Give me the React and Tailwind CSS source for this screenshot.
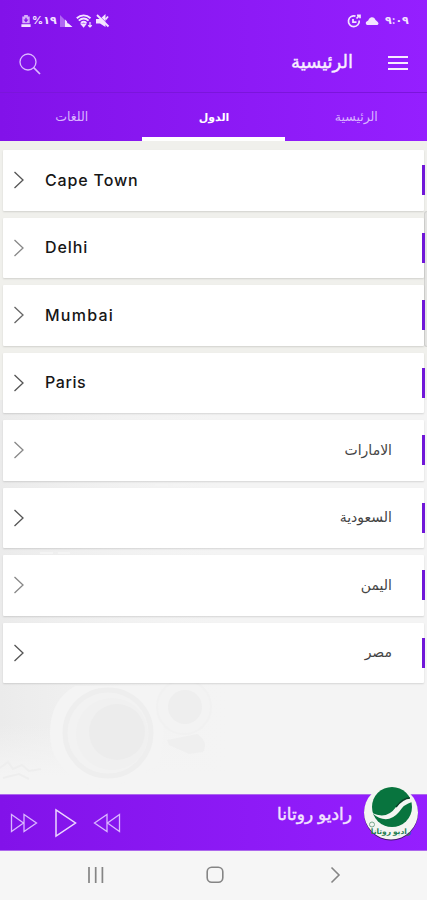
// Countries tab of the radio app, with the mini player at the bottom
const countries = [
  { name: 'Cape Town', latin: true, cls: 'tracking-[0.85px]', arrow: 'text-[#555]' },
  { name: 'Delhi', latin: true, cls: 'tracking-[0.9px]', arrow: 'text-[#888]' },
  { name: 'Mumbai', latin: true, cls: 'tracking-[1.25px]', arrow: 'text-[#666]' },
  { name: 'Paris', latin: true, cls: 'tracking-[0.6px]', arrow: 'text-[#555]' },
  { name: 'الامارات', arrow: 'text-[#888]' },
  { name: 'السعودية', arrow: 'text-[#555]' },
  { name: 'اليمن', arrow: 'text-[#888]' },
  { name: 'مصر', arrow: 'text-[#555]' },
];

const tabs = [
  { label: 'اللغات', color: 'text-[#d9b3ff]' },
  { label: 'الدول', active: true, color: 'text-white font-bold text-[11px]' },
  { label: 'الرئيسية', color: 'text-[#d9b3ff]' },
];

function StatusBar() {
  return (
    <div className="flex h-10 items-center justify-between pt-px pl-[21px] pr-[21px] text-[#f3e4ff]">
      <div className="flex items-center">
        <svg width="10" height="12" viewBox="0 0 10 13" fill="currentColor">
          <path d="M3 0h4v1.5h2V9H1V1.5h2z" opacity=".75" />
          <path d="M4.3 3h1.4v2h2L5 8 2.3 5h2z" fill="#8615ed" />
          <path d="M0 10h10v3H0z" />
        </svg>
        <span className="ml-[1px] w-[25px] text-[11px] leading-none font-bold tracking-[-1.1px] whitespace-nowrap [direction:ltr]">%١٩</span>
        <svg className="ml-[3px]" width="13" height="13" viewBox="0 0 13 13" fill="currentColor">
          <path d="M0 1l12 12H0z" opacity=".4" />
          <path d="M5 5.500l2 2V9l2 1 3.500 3H5z" />
        </svg>
        <svg className="ml-[3px]" width="17" height="14" viewBox="0 0 17 14" fill="none" stroke="currentColor" strokeWidth="1.900">
          <path d="M.8 4.200C4.800 .4 10.500 .4 14.500 4.200" />
          <path d="M2.800 6.600c3-2.700 6.800-2.700 9.800 0M5 8.900c1.700-1.400 3.700-1.400 5.400 0" />
          <path d="M6 10.500h3L7.600 12.300z" fill="currentColor" />
          <path d="M14 8v5m-1.800-1.700l1.800 1.700 1.800-1.700" strokeWidth="1.200" />
        </svg>
        <svg className="ml-[3px]" width="14" height="14" viewBox="0 0 14 14" fill="currentColor">
          <path d="M0 5h4l5.500-5v13L4 9.500H0z" />
          <path d="M2 .5l12 12" stroke="#8917f3" strokeWidth="1" />
          <path d="M1 1l11.500 11.500M9.500 5.500l2.500-3" stroke="currentColor" strokeWidth="1.800" />
        </svg>
      </div>
      <div className="flex items-center">
        <svg width="14" height="14" viewBox="0 0 14 14" fill="none" stroke="currentColor" strokeWidth="1.700">
          <path d="M8.500 2.100A5.400 5.400 0 1 0 12.200 6.500" />
          <path d="M6 5v3.200h3.500M9.500 4.500L12 2M10 1.300h3v3" />
        </svg>
        <svg className="ml-[4px]" width="14" height="9" viewBox="0 0 14 9" fill="currentColor">
          <path d="M2.300 9A2 2 0 0 1 2 5.200Q3.500 4.600 3.800 3.200A3.500 3.500 0 0 1 9.500 2.300Q10.500 4.700 12.500 5.700 14.500 7.700 12.500 9z" />
        </svg>
        <span className="ml-[6px] w-[21px] text-[11px] leading-none font-bold tracking-[-1.600px] whitespace-nowrap [direction:ltr]">٩:٠٩</span>
      </div>
    </div>
  );
}

function Header() {
  return (
    <header className="flex h-[141px] shrink-0 flex-col bg-linear-to-r from-[#8212e9] to-[#951fff]">
      <StatusBar />
      <div className="flex h-[53px] items-center border-b border-[#7b15db] pb-[6px] pl-[19px] pr-[19px] text-[#f8efff]">
        <svg className="mt-[1px]" width="22" height="22" viewBox="0 0 22 22" fill="none" stroke="#dcbaff" strokeWidth="1.300">
          <circle cx="9" cy="9" r="8" />
          <path d="M14.700 14.700L21 21" strokeWidth="1.700" />
        </svg>
        <h1 dir="rtl" className="mr-[35px] mb-[3px] ml-auto w-[62px] text-[18px] leading-6 font-normal whitespace-nowrap [-webkit-text-stroke:0.4px_#f8efff]">
          الرئيسية
        </h1>
        <div className="flex w-5 flex-col gap-[4px]">
          <i className="h-[2px] bg-[#f6ebff]" />
          <i className="h-[2px] bg-[#f6ebff]" />
          <i className="h-[2px] bg-[#f6ebff]" />
        </div>
      </div>
      <nav className="grid h-12 grid-cols-3 text-[12.500px]">
        {tabs.map((tab) => (
          <div
            key={tab.label}
            className={`flex items-center justify-center border-b-4 ${tab.active ? 'border-white' : 'border-transparent'} ${tab.color}`}
          >
            <span dir="rtl" className="mt-[4px] ml-[1px]">{tab.label}</span>
          </div>
        ))}
      </nav>
    </header>
  );
}

// Faint loudspeakers behind the list
function Backdrop() {
  return (
    <svg className="absolute inset-0" width="427" height="653" viewBox="0 141 427 653">
      <defs>
        <linearGradient id="shade">
          <stop offset="0" stopColor="#ebebeb" />
          <stop offset="1" stopColor="#f3f3f3" stopOpacity="0" />
        </linearGradient>
        <linearGradient id="fade" x1="0" x2="0" y1="0" y2="1">
          <stop offset="0" stopColor="#f4f4f4" stopOpacity="0" />
          <stop offset="1" stopColor="#f4f4f4" />
        </linearGradient>
      </defs>
      <path d="M0 141H427V400H0z" fill="#f0f0ec" />
      <path d="M0 400H230V794H0z" fill="url(#shade)" />
      <path d="M0 725H230V775H0z" fill="url(#fade)" />
      <path d="M0 775H230V794H0z" fill="#f4f4f4" />
      <path d="M40 553h30M155 485h38" stroke="#f4f4f4" strokeWidth="2" strokeDasharray="13 5" />
      <path d="M75 686H160Q168 735 158 765L108 791Q50 778 50 733 50 700 75 686z" fill="#f4f4f4" />
      <circle cx="108" cy="733" r="43" fill="#f2f2f2" stroke="#eee" strokeWidth="5" />
      <circle cx="112" cy="734" r="36" fill="#f0f0f0" />
      <circle cx="117" cy="732" r="28" fill="#ececec" />
      <circle cx="184" cy="707" r="27" fill="#f3f3f3" stroke="#f1f1f1" strokeWidth="2" />
      <circle cx="185" cy="707" r="17" fill="#eee" />
      <path d="M167 740l30-6q12 8 6 18l-14 2-20-9z" fill="#efefef" />
      <path d="M0 768l8-6 5 7 9-4 7 6 12-2M3 778l16-4 10 5" fill="none" stroke="#eee" strokeWidth="2" />
    </svg>
  );
}

function CountryCard({ item }) {
  return (
    <li className="mr-[3px] flex h-[60.500px] items-center rounded-[1px] bg-white pl-[10px] shadow-[0_1px_2px_rgba(0,0,0,0.13)]">
      <svg className={item.arrow} width="12" height="18" viewBox="0 0 12 18" fill="none" stroke="currentColor" strokeWidth="1.300">
        <path d="M1.500 1l8.500 8-8.500 8" />
      </svg>
      {item.latin ? (
        <span className={`mb-[1px] ml-[20px] text-[16px] font-medium text-[#161616] ${item.cls}`}>{item.name}</span>
      ) : (
        <span dir="rtl" className="mr-[30px] mb-[2px] ml-auto text-[14px] text-[#444]">{item.name}</span>
      )}
      <i className={`-mr-px h-[30px] w-[3px] bg-[#7016d8] ${item.latin ? 'ml-auto' : ''}`} />
    </li>
  );
}

function RotanaLogo() {
  return (
    <svg className="absolute top-[-10px] right-[8px]" width="56" height="56" viewBox="0 0 56 56">
      <circle cx="28" cy="28.500" r="27" fill="#3c1668" />
      <circle cx="28" cy="27.500" r="27" fill="#f4f5f2" />
      <circle cx="29" cy="22" r="20" fill="#08743e" />
      <path d="M9 28q15 7 24-6 7-10 15-9l1 4q-8 2-13 10-12 14-27 1z" fill="#f4f5f2" />
      <path d="M33 22q7-9 14-9" fill="none" stroke="#063f25" strokeWidth="1.500" />
      <text x="28" y="49" textAnchor="middle" fontSize="7.500" fontWeight="bold" fill="#287f55" direction="rtl">راديو روتانا</text>
      <circle cx="9" cy="39.500" r="2.500" fill="none" stroke="#78a78c" />
    </svg>
  );
}

function Player() {
  return (
    <div className="relative flex h-[57px] shrink-0 items-center border-y border-[#ad68ed] bg-linear-to-r from-[#8212e9] to-[#951fff] pt-[1px] pl-[10px]">
      <svg width="28" height="20" viewBox="0 0 28 20" fill="none" stroke="#d9b6ff" strokeWidth="1.300">
        <path d="M1.500 1.500v17L13.500 10zM14 1.500v17L26.500 10z" />
      </svg>
      <svg className="ml-[16px]" width="23" height="30" viewBox="0 0 23 30" fill="none" stroke="#ecd6ff" strokeWidth="1.500">
        <path d="M2 2v26l19.500-13z" />
      </svg>
      <svg className="ml-[16px]" width="28" height="20" viewBox="0 0 28 20" fill="none" stroke="#d9b6ff" strokeWidth="1.300">
        <path d="M26.500 1.500v17L14.500 10zM14 1.500v17L1.500 10z" />
      </svg>
      <span dir="rtl" className="mr-[75px] mb-[19px] ml-auto text-[17px] leading-5 whitespace-nowrap text-[#f3e5ff] [-webkit-text-stroke:0.4px_#f3e5ff]">راديو روتانا</span>
      <RotanaLogo />
    </div>
  );
}

function SystemNav() {
  return (
    <div className="flex h-[49px] shrink-0 items-center bg-[#f6f6f6] pb-[2px] pl-[87px]">
      <svg width="17" height="16" viewBox="0 0 17 16" stroke="#858585" strokeWidth="1.700">
        <path d="M2 0v16M8.700 0v16M15.400 0v16" />
      </svg>
      <svg className="ml-[102px]" width="18" height="18" viewBox="0 0 18 18" fill="none" stroke="#858585" strokeWidth="1.600">
        <rect x="1.200" y="1.200" width="15.600" height="15" rx="4.500" />
      </svg>
      <svg className="ml-[106px]" width="12" height="18" viewBox="0 0 12 18" fill="none" stroke="#858585" strokeWidth="1.600">
        <path d="M1.500 1.500L9 9l-7.500 7.500" />
      </svg>
    </div>
  );
}

export default function App() {
  return (
    <div className="flex h-[900px] w-[427px] flex-col overflow-hidden bg-[#f4f4f4] font-[Inter,'DejaVu_Sans',sans-serif]">
      <Header />
      <main className="relative flex-1">
        <Backdrop />
        <i className="absolute top-[70px] right-0 h-[136px] w-[3px] rounded-l border border-r-0 border-[#d2d2d0] bg-[#e4e4e2]" />
        <ul className="relative flex flex-col gap-[7px] pt-[9px] pl-[3px]">
          {countries.map((item) => (
            <CountryCard key={item.name} item={item} />
          ))}
        </ul>
      </main>
      <Player />
      <SystemNav />
    </div>
  );
}
